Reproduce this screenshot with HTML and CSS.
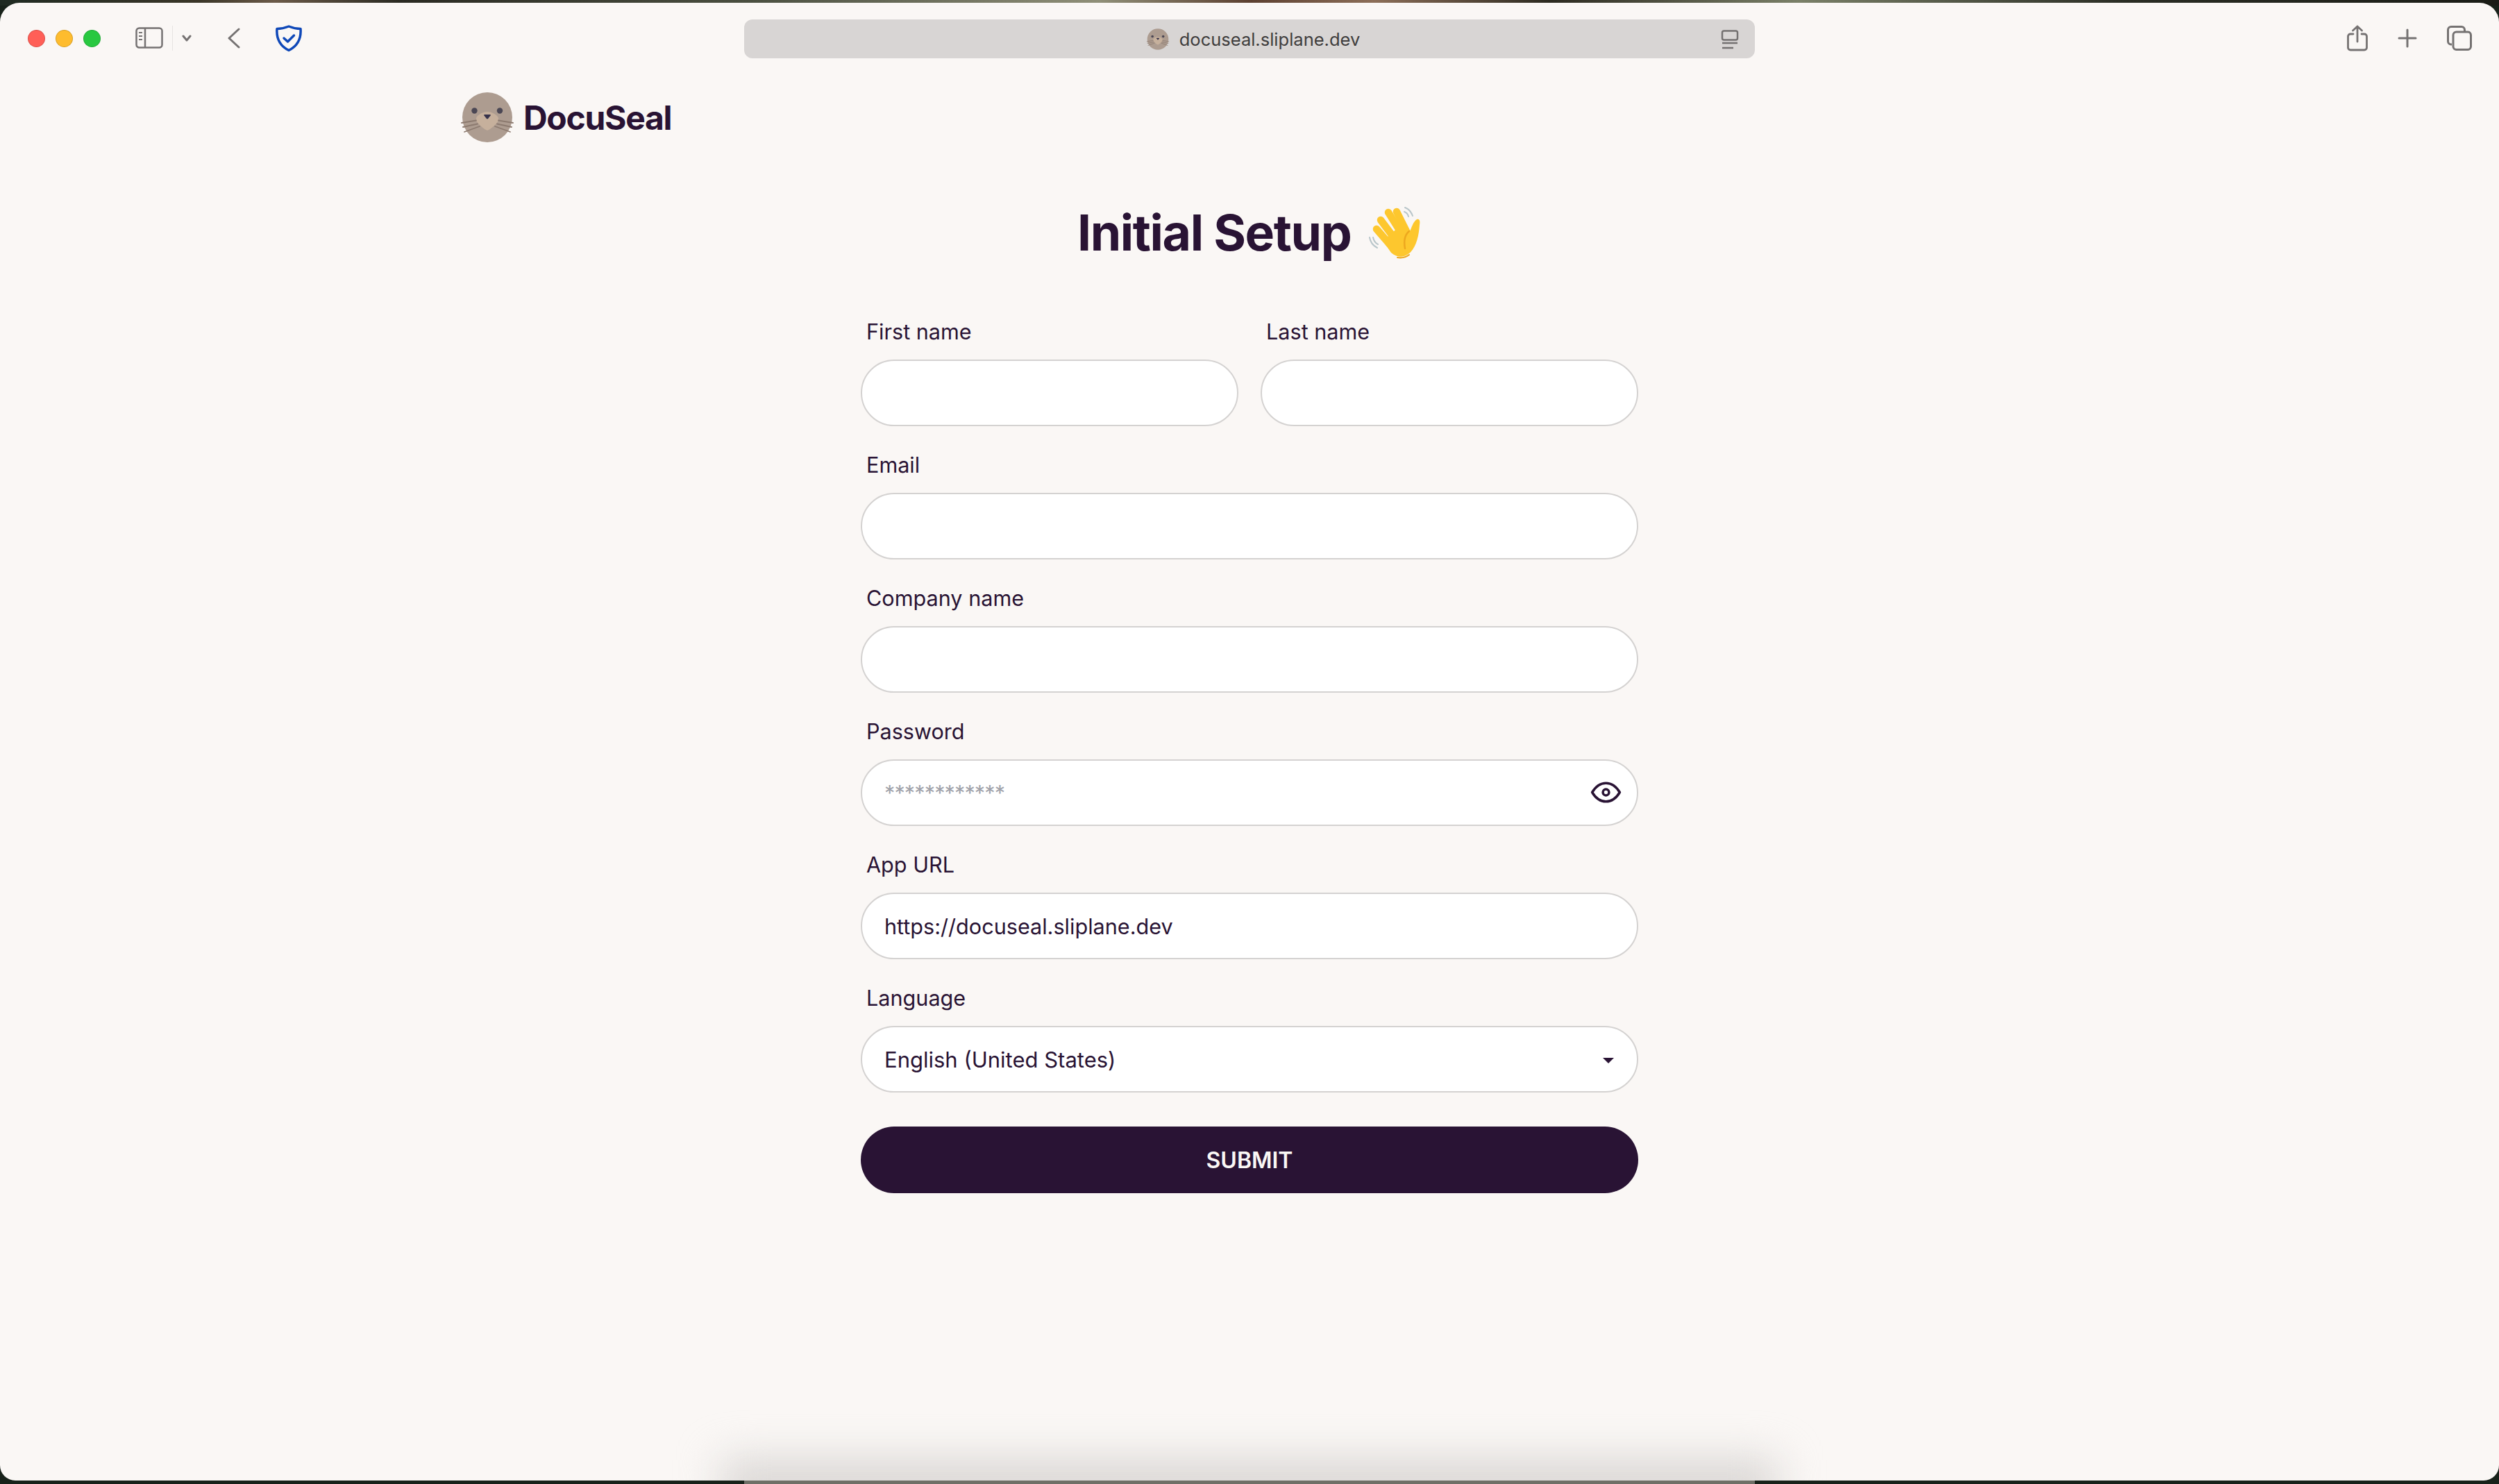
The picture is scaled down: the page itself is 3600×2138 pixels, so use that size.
FILE: index.html
```html
<!DOCTYPE html>
<html lang="en">

<head>
    <meta charset="UTF-8">
    <title>DocuSeal | Initial Setup</title>
    <link rel="stylesheet" href="styles.css">
</head>

<body>
    <svg class="defs" width="0" height="0">
        <symbol id="seal" viewBox="0 0 80 72">
            <circle cx="40" cy="36" r="36" fill="#ad9c90"/>
            <path d="M40 28c-6 0-11 3-15 7c-2 3-1 7 2 10c4 4 8 8 13 10c5-2 9-6 13-10c3-3 4-7 2-10c-4-4-9-7-15-7z" fill="#c6b09c"/>
            <circle cx="21.500" cy="26.500" r="4.200" fill="#4b4754"/>
            <circle cx="58" cy="26.500" r="4.200" fill="#4b4754"/>
            <path d="M36 32h8c.8 0 1 .8.6 1.400L41 38c-.5.5-1.500.5-2 0l-3.600-4.600c-.4-.6-.2-1.400.6-1.400z" fill="#37324a"/>
            <g stroke="#8c7a6f" stroke-width="1.800" stroke-linecap="round" fill="none">
                <path d="M3 44l21-3.500"/>
                <path d="M5 50l21-4.500"/>
                <path d="M7 57l22-8"/>
                <path d="M77 44l-21-3.500"/>
                <path d="M75 50l-21-4.500"/>
                <path d="M73 57l-22-8"/>
            </g>
        </symbol>
    </svg>

    <div class="window">
        <div class="toolbar">
            <div class="toolbar-left">
                <span class="light light-red"></span>
                <span class="light light-yellow"></span>
                <span class="light light-green"></span>
                <svg class="tool-sidebar" width="40" height="32" viewBox="0 0 40 32" fill="none" stroke="#757272" stroke-width="2.500">
                    <rect x="1.500" y="1.500" width="37" height="28" rx="4"/>
                    <path d="M14 2v27"/>
                    <path d="M5 8h5M5 13h5M5 18h5" stroke-width="2"/>
                </svg>
                <span class="tool-sep"></span>
                <svg class="tool-down" width="14" height="10" viewBox="0 0 14 10" fill="none" stroke="#757272" stroke-width="3" stroke-linecap="round" stroke-linejoin="round">
                    <path d="M2 2l5 6l5-6"/>
                </svg>
                <svg class="tool-back" width="18" height="30" viewBox="0 0 18 30" fill="none" stroke="#757272" stroke-width="3" stroke-linecap="round" stroke-linejoin="round">
                    <path d="M16 2L2 15l14 13"/>
                </svg>
                <svg class="tool-shield" width="40" height="40" viewBox="0 0 40 40" fill="none" stroke="#0f48b8" stroke-width="3.500" stroke-linecap="round" stroke-linejoin="round">
                    <path d="M20 3c5 2 11 3.500 17 3.500c1 13-3 24-17 31c-14-7-18-18-17-31c6 0 12-1.500 17-3.500z"/>
                    <path d="M13 20l5.500 5l9-9"/>
                </svg>
            </div>

            <div class="address">
                <svg class="favicon" width="34" height="31"><use href="#seal"/></svg>
                <span class="address-text">docuseal.sliplane.dev</span>
                <svg class="reader" width="26" height="28" viewBox="0 0 26 28" fill="none" stroke="#747171">
                    <rect x="2" y="1.500" width="22" height="13" rx="2.500" stroke-width="2.500"/>
                    <path d="M2 19h22M2 26h16" stroke-width="2.500"/>
                </svg>
            </div>

            <div class="toolbar-right">
                <svg width="30" height="38" viewBox="0 0 30 38" fill="none" stroke="#757272" stroke-width="2.800" stroke-linecap="round" stroke-linejoin="round">
                    <path d="M9 13H5c-2 0-3.500 1.500-3.500 3.500v16c0 2 1.500 3.500 3.500 3.500h20c2 0 3.500-1.500 3.500-3.500v-16c0-2-1.500-3.500-3.500-3.500h-4"/>
                    <path d="M15 24V2M8.500 8L15 2l6.500 6"/>
                </svg>
                <svg width="28" height="28" viewBox="0 0 28 28" fill="none" stroke="#757272" stroke-width="3" stroke-linecap="round">
                    <path d="M14 2v24M2 14h24"/>
                </svg>
                <svg width="36" height="36" viewBox="0 0 36 36" fill="none" stroke="#757272" stroke-width="3">
                    <path d="M7 27H6c-2.500 0-4.500-2-4.500-4.500V6c0-2.500 2-4.500 4.500-4.500h15c2.500 0 4.500 2 4.500 4.500v2"/>
                    <rect x="9" y="9" width="25.500" height="25.500" rx="4.500"/>
                </svg>
            </div>
        </div>

        <div class="page">
            <div class="logo">
                <svg class="logo-icon" width="80" height="72"><use href="#seal"/></svg>
                <span class="logo-text">DocuSeal</span>
            </div>

            <form class="form" action="/setup" method="post">
                <h1 class="title">Initial Setup
                    <svg class="wave" width="78" height="78" viewBox="0 0 78 78" fill="none" stroke-linecap="round">
                        <g stroke="#fdc72e" stroke-width="10.500">
                            <path d="M13 35l19 22"/>
                            <path d="M19 22l21 28"/>
                            <path d="M30 11l20 32"/>
                            <path d="M42 10l15 30"/>
                        </g>
                        <path d="M22 52L52 26l9 12c3-6 5-14 10-17c4-1 5 2 4 8c-1 16-5 33-15 41c-8 7-18 6-26-1z" fill="#fdc72e"/>
                        <path d="M60 38c-6 5-8 14-6 25" stroke="#eda81f" stroke-width="2.500"/>
                        <path d="M60 72c-5 4-11 5-17 4" stroke="#eda81f" stroke-width="2"/>
                        <g stroke="#b8c5c9" stroke-width="2">
                            <path d="M54 4c5 2 9 6 11 12"/>
                            <path d="M53 10c3 1 5 3 6 7"/>
                            <path d="M3 47c1 6 5 12 11 15"/>
                            <path d="M8 47c1 5 3 8 7 10"/>
                        </g>
                    </svg>
                </h1>

                <div class="row-two">
                    <div class="field">
                        <label class="field-label" for="first_name">First name</label>
                        <input class="input" id="first_name" type="text">
                    </div>
                    <div class="field">
                        <label class="field-label" for="last_name">Last name</label>
                        <input class="input" id="last_name" type="text">
                    </div>
                </div>

                <div class="field">
                    <label class="field-label" for="email">Email</label>
                    <input class="input" id="email" type="text">
                </div>

                <div class="field">
                    <label class="field-label" for="company">Company name</label>
                    <input class="input" id="company" type="text">
                </div>

                <div class="field">
                    <label class="field-label" for="password">Password</label>
                    <div class="input-wrap">
                        <input class="input" id="password" type="text" placeholder="************">
                        <svg class="eye" width="53" height="53" viewBox="0 0 24 24" fill="none" stroke="#291334" stroke-width="1.600" stroke-linecap="round" stroke-linejoin="round">
                            <path d="M10 12a2 2 0 1 0 4 0a2 2 0 0 0 -4 0"/>
                            <path d="M21 12c-2.400 4 -5.400 6 -9 6c-3.600 0 -6.600 -2 -9 -6c2.400 -4 5.400 -6 9 -6c3.600 0 6.600 2 9 6"/>
                        </svg>
                    </div>
                </div>

                <div class="field">
                    <label class="field-label" for="app_url">App URL</label>
                    <input class="input" id="app_url" type="text" value="https://docuseal.sliplane.dev">
                </div>

                <div class="field">
                    <label class="field-label" for="language">Language</label>
                    <div class="input-wrap">
                        <select class="input select" id="language">
                            <option>English (United States)</option>
                        </select>
                        <span class="select-arrow"></span>
                    </div>
                </div>

                <button class="submit" type="submit">SUBMIT</button>
            </form>
        </div>

        <div class="dock-shadow"></div>
    </div>

    <div class="dock"></div>
</body>

</html>
```

FILE: styles.css
```css
html,
body {
    height: 100%;
    margin: 0;
    padding: 0;
}

body {
    height: 2138px;
    overflow: hidden;
    background: linear-gradient(90deg, #1f2a22 0%, #3a3628 8%, #6b5a48 11%, #2a2a22 16%, #4a4f40 30%, #8f8f78 44%, #5c4030 50%, #8c6e58 55%, #2c2a20 62%, #7a8068 72%, #2a2d24 85%, #1a1c16 100%) top / 100% 8px no-repeat, #18221a;
    font-family: Inter, "Liberation Sans", sans-serif;
    color: #291334;
    position: relative;
}

.defs {
    position: absolute;
}

.window {
    position: relative;
    box-sizing: border-box;
    height: 2129px;
    margin-top: 4px;
    border-radius: 28px 28px 22px 22px;
    background: #faf7f5;
    overflow: hidden;
}

/* browser chrome */
.toolbar {
    height: 102px;
    display: grid;
    grid-template-columns: 1fr 1456px 1fr;
    align-items: center;
}

.toolbar-left {
    display: flex;
    align-items: center;
    padding-left: 40px;
}

.light {
    box-sizing: border-box;
    width: 25px;
    height: 25px;
    border-radius: 50%;
    margin-right: 15px;
    border: 1px solid rgba(0, 0, 0, 0.15);
}

.light-red {
    background: #ff5f57;
}

.light-yellow {
    background: #febc2e;
}

.light-green {
    background: #28c840;
}

.tool-sidebar {
    margin-left: 35px;
}

.tool-sep {
    width: 1px;
    height: 36px;
    background: #e6e3e1;
    margin-left: 13px;
}

.tool-down {
    margin-left: 13px;
}

.tool-back {
    margin-left: 52px;
}

.tool-shield {
    margin-left: 50px;
}

.address {
    box-sizing: border-box;
    height: 56px;
    margin-top: 2px;
    padding-left: 10px;
    border-radius: 12px;
    background: #d8d5d4;
    display: flex;
    align-items: center;
    justify-content: center;
    gap: 14px;
    position: relative;
    font-size: 25.500px;
    color: #3f3d3d;
}

.reader {
    position: absolute;
    right: 23px;
    top: 15px;
}

.toolbar-right {
    display: flex;
    align-items: center;
    justify-content: flex-end;
    gap: 43px;
    padding-right: 39px;
}

/* page */
.page {
    width: 2272px;
    margin: 0 auto;
}

.logo {
    display: flex;
    align-items: center;
    gap: 12px;
    padding-top: 27px;
    margin-left: -2px;
}

.logo-text {
    font-size: 48px;
    font-weight: 700;
    letter-spacing: -1.300px;
}

.form {
    width: 1120px;
    margin: 0 auto;
}

.title {
    margin: 82px 0 71px;
    font-size: 71.500px;
    line-height: 96px;
    font-weight: 700;
    text-align: center;
    letter-spacing: -1.400px;
}

.wave {
    margin-left: 8px;
    vertical-align: -12px;
}

.row-two {
    display: grid;
    grid-template-columns: 1fr 1fr;
    gap: 32px;
}

.field {
    margin-bottom: 32px;
}

.field-label {
    display: block;
    padding: 0 8px 16px;
    font-size: 30.600px;
    line-height: 48px;
}

.input-wrap {
    position: relative;
}

.input {
    display: block;
    box-sizing: border-box;
    width: 100%;
    height: 96px;
    padding: 0 32px;
    border: 2px solid #d4d2d1;
    border-radius: 48px;
    background: #fff;
    font-family: inherit;
    font-size: 30.600px;
    color: #291334;
    outline: none;
}

.input::placeholder {
    color: #a0a2aa;
    letter-spacing: -0.900px;
}

.select {
    appearance: none;
    font-size: 31px;
}

.eye {
    position: absolute;
    right: 20px;
    top: 21px;
}

.select-arrow {
    position: absolute;
    right: 35px;
    top: 46px;
    border-left: 8px solid transparent;
    border-right: 8px solid transparent;
    border-top: 8px solid #291334;
}

.submit {
    display: block;
    width: 100%;
    height: 96px;
    margin-top: 49px;
    border: 0;
    border-radius: 48px;
    background: #291334;
    color: #faf7f5;
    font-family: inherit;
    font-size: 32px;
    font-weight: 600;
}

/* bottom of the screen */
.dock-shadow {
    position: absolute;
    left: 1040px;
    right: 1040px;
    bottom: -40px;
    height: 70px;
    background: #d8d5d3;
    filter: blur(30px);
}

.dock {
    position: absolute;
    left: 1072px;
    width: 1456px;
    bottom: 0;
    height: 5px;
    background: #6f7067;
}
```
